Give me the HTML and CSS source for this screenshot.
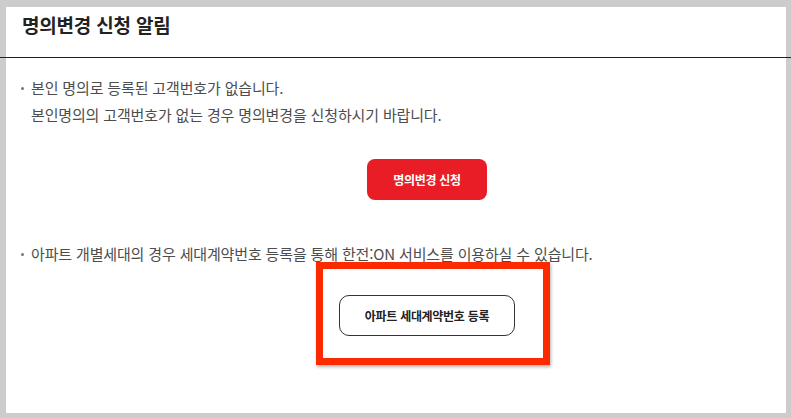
FILE: index.html
```html
<!DOCTYPE html>
<html lang="ko">
<head>
<meta charset="utf-8">
<link rel="stylesheet" href="styles.css">
</head>
<body>
<div class="panel">
  <div class="header">
    <h1 class="title">명의변경 신청 알림</h1>
  </div>
  <div class="content">
    <ul class="notes">
      <li>본인 명의로 등록된 고객번호가 없습니다.<br>본인명의의 고객번호가 없는 경우 명의변경을 신청하시기 바랍니다.</li>
    </ul>
    <div class="btn-row first">
      <button class="btn btn-red">명의변경 신청</button>
    </div>
    <ul class="notes second">
      <li>아파트 개별세대의 경우 세대계약번호 등록을 통해 한전:ON 서비스를 이용하실 수 있습니다.</li>
    </ul>
    <div class="btn-row last">
      <button class="btn btn-line">아파트 세대계약번호 등록</button>
    </div>
  </div>
  <div class="highlight"></div>
</div>
</body>
</html>
```

FILE: styles.css
```css
html, body {
  margin: 0;
  padding: 0;
}
body {
  background: #cccccc;
  width: 791px;
  height: 418px;
  overflow: hidden;
  font-family: "Noto Sans CJK KR", "Noto Sans", sans-serif;
}
.panel {
  position: relative;
  margin: 7px 5px 0 6px;
  height: 406px;
  background: #ffffff;
}
.header {
  height: 50px;
  margin: 0 -5px 0 -6px;
  padding-left: 22px;
  border-bottom: 1px solid #222222;
  display: flex;
  align-items: flex-start;
}
.title {
  margin: 0;
  padding-top: 5px;
  font-size: 19px;
  font-weight: 700;
  line-height: 26px;
  color: #222222;
  letter-spacing: -0.2px;
}
.content {
  padding-left: 15px;
}
.notes {
  list-style: none;
  margin: 16px 0 0;
  padding: 0;
}
.notes.second {
  margin-top: 40px;
}
.notes li {
  position: relative;
  padding-left: 10px;
  font-size: 15px;
  line-height: 27px;
  letter-spacing: -0.15px;
  color: #4d4d4d;
}
.notes li::before {
  content: "";
  position: absolute;
  left: 0;
  top: 13px;
  width: 3px;
  height: 3px;
  border-radius: 50%;
  background: #777777;
}
.btn-row {
  display: flex;
  justify-content: center;
  padding-left: 47px;
}
.btn-row.first {
  margin-top: 31px;
}
.btn-row.last {
  margin-top: 28px;
}
.btn {
  font-family: "Noto Sans CJK KR", "Noto Sans", sans-serif;
  font-size: 12px;
  font-weight: 700;
  letter-spacing: -0.3px;
  height: 41px;
  padding: 0;
  cursor: pointer;
}
.btn-red {
  width: 120px;
  background: #e81d25;
  color: #ffffff;
  border: none;
  border-radius: 8px;
}
.btn-line {
  width: 176px;
  background: #ffffff;
  color: #222222;
  border: 1px solid #333333;
  border-radius: 10px;
}
.highlight {
  position: absolute;
  left: 310px;
  top: 255px;
  width: 220px;
  height: 89px;
  border: 7px solid #fb2a00;
  box-shadow: 1px 2px 3px rgba(0, 0, 0, 0.3);
}
```
